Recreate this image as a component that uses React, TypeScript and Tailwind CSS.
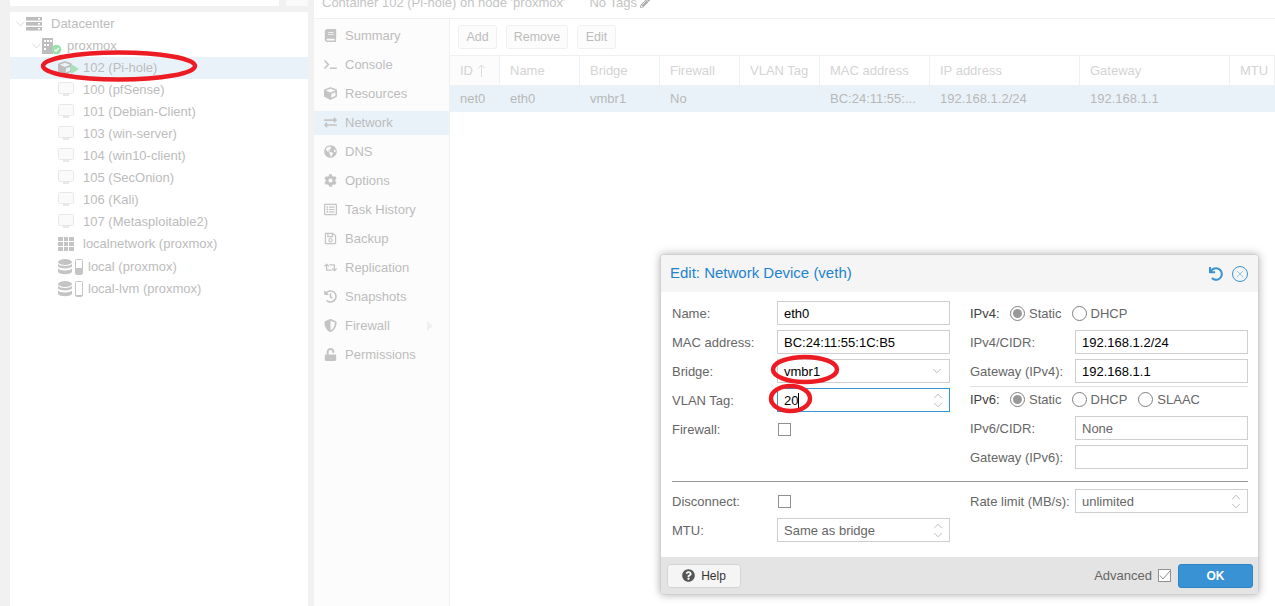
import type { ReactNode } from "react"
import {
  FaBook,
  FaCog,
  FaCube,
  FaExchangeAlt,
  FaGlobeAmericas,
  FaHistory,
  FaPencilAlt,
  FaQuestionCircle,
  FaRegListAlt,
  FaRegSave,
  FaRetweet,
  FaShieldAlt,
  FaTerminal,
  FaUndo,
  FaUnlock,
} from "react-icons/fa"
import { ChevronDown, ChevronUp, X } from "lucide-react"

const navItems = [
  { label: "Summary", icon: <FaBook /> },
  { label: "Console", icon: <FaTerminal /> },
  { label: "Resources", icon: <FaCube /> },
  { label: "Network", icon: <FaExchangeAlt />, active: true },
  { label: "DNS", icon: <FaGlobeAmericas /> },
  { label: "Options", icon: <FaCog /> },
  { label: "Task History", icon: <FaRegListAlt /> },
  { label: "Backup", icon: <FaRegSave /> },
  { label: "Replication", icon: <FaRetweet /> },
  { label: "Snapshots", icon: <FaHistory /> },
  { label: "Firewall", icon: <FaShieldAlt />, arrow: true },
  { label: "Permissions", icon: <FaUnlock /> },
]

const vms = [
  "100 (pfSense)",
  "101 (Debian-Client)",
  "103 (win-server)",
  "104 (win10-client)",
  "105 (SecOnion)",
  "106 (Kali)",
  "107 (Metasploitable2)",
]

const columns = [
  { label: "ID", width: "w-[50px]", value: "net0" },
  { label: "Name", width: "w-[80px]", value: "eth0" },
  { label: "Bridge", width: "w-[80px]", value: "vmbr1" },
  { label: "Firewall", width: "w-[80px]", value: "No" },
  { label: "VLAN Tag", width: "w-[80px]", value: "" },
  { label: "MAC address", width: "w-[110px]", value: "BC:24:11:55:..." },
  { label: "IP address", width: "w-[150px]", value: "192.168.1.2/24" },
  { label: "Gateway", width: "w-[150px]", value: "192.168.1.1" },
  { label: "MTU", width: "w-[45px]", value: "" },
]

function Caret() {
  return (
    <svg width="9" height="6" viewBox="0 0 9 6" className="shrink-0">
      <path d="M0.5 0.5 L4.5 5 L8.5 0.5" fill="none" stroke="#dcdcdc" strokeWidth="1" />
    </svg>
  )
}

function DesktopIcon() {
  return (
    <svg width="16" height="16" viewBox="0 0 16 16" className="shrink-0">
      <rect x="0.5" y="0.5" width="15" height="11" rx="1" fill="#fafafa" stroke="#e8e8e8" />
      <rect x="5" y="12" width="6" height="2" fill="#e8e8e8" />
    </svg>
  )
}

function StorageIcon({ fill }: { fill: number }) {
  return (
    <span className="flex shrink-0 items-center gap-[3px]">
      <svg width="14" height="16" viewBox="0 0 14 16">
        <ellipse cx="7" cy="3" rx="7" ry="3" fill="#c4c4c4" />
        <path d="M0 5 C2 7.5 12 7.5 14 5 V7.5 C12 10 2 10 0 7.5 Z" fill="#c4c4c4" />
        <path d="M0 9.5 C2 12 12 12 14 9.5 V13 C12 16 2 16 0 13 Z" fill="#c4c4c4" />
      </svg>
      <svg width="8" height="16" viewBox="0 0 8 16">
        <rect x="0.5" y="0.5" width="7" height="15" rx="1" fill="#fff" stroke="#c4c4c4" />
        <rect x="1" y={15 - fill} width="6" height={fill} fill="#c4c4c4" />
      </svg>
    </span>
  )
}

function TreeRow({
  indent,
  icon,
  label,
  active,
  caret,
}: {
  indent: string
  icon: ReactNode
  label: string
  active?: boolean
  caret?: boolean
}) {
  return (
    <div className={`flex h-[22px] items-center text-[13px] text-[#bcbcbc] ${indent} ${active ? "bg-[#eaf2f9]" : ""}`}>
      {caret && <span className="mr-[1px] flex"><Caret /></span>}
      {icon}
      <span className="ml-[9px] whitespace-nowrap">{label}</span>
    </div>
  )
}

function Tree() {
  return (
    <div className="flex h-full flex-col gap-[6px]">
      <div className="flex h-[6px] shrink-0 gap-[7px]">
        <div className="w-[269px] bg-white" />
        <div className="w-[22px] bg-[#fafafa]" />
      </div>
      <div className="flex-1 bg-white pt-[1px]">
        <TreeRow
          indent="pl-[6px]"
          caret
          label="Datacenter"
          icon={
            <svg width="16" height="14" viewBox="0 0 16 14" className="shrink-0">
              <rect width="16" height="3.6" fill="#bdbdbd" />
              <rect y="5" width="16" height="3.6" fill="#bdbdbd" />
              <rect y="10" width="16" height="3.6" fill="#bdbdbd" />
              <rect x="12" y="1" width="2" height="1.5" fill="#fff" />
              <rect x="12" y="6" width="2" height="1.5" fill="#fff" />
              <rect x="12" y="11" width="2" height="1.5" fill="#fff" />
            </svg>
          }
        />
        <TreeRow
          indent="pl-[22px]"
          caret
          label="proxmox"
          icon={
            <svg width="20" height="17" viewBox="0 0 20 17" className="-mr-[4px] shrink-0">
              <rect x="0" y="0" width="11" height="16" fill="#bdbdbd" />
              <rect x="2" y="2" width="2" height="2" fill="#fff" />
              <rect x="5" y="2" width="2" height="2" fill="#fff" />
              <rect x="8" y="2" width="2" height="2" fill="#fff" />
              <rect x="2" y="6" width="2" height="2" fill="#fff" />
              <rect x="5" y="6" width="2" height="2" fill="#fff" />
              <rect x="2" y="10" width="2" height="2" fill="#fff" />
              <circle cx="14.5" cy="11.5" r="4.8" fill="#9adfae" />
              <path d="M12.3 11.5 L14 13.2 L16.8 10" fill="none" stroke="#fff" strokeWidth="1.3" />
            </svg>
          }
        />
        <TreeRow
          indent="pl-[48px]"
          active
          label="102 (Pi-hole)"
          icon={
            <span className="relative flex w-[16px] shrink-0 items-center text-[14px] text-[#bdbdbd]">
              <FaCube />
              <svg width="8" height="10" viewBox="0 0 8 10" className="absolute left-[13px] top-[3px]">
                <path d="M0 0 L8 5 L0 10 Z" fill="#a5e3b5" />
              </svg>
            </span>
          }
        />
        {vms.map((vm) => (
          <TreeRow key={vm} indent="pl-[48px]" label={vm} icon={<DesktopIcon />} />
        ))}
        <TreeRow
          indent="pl-[48px]"
          label="localnetwork (proxmox)"
          icon={
            <span className="grid w-[16px] shrink-0 grid-cols-3 gap-[1px]">
              {Array.from({ length: 9 }).map((_, i) => (
                <span key={i} className="h-[4px] bg-[#c4c4c4]" />
              ))}
            </span>
          }
        />
        <div className="pt-[1px]">
          <div className="flex h-[22px] items-center pl-[48px] text-[13px] text-[#bcbcbc]">
            <StorageIcon fill={6} />
            <span className="ml-[5px] whitespace-nowrap">local (proxmox)</span>
          </div>
          <div className="flex h-[22px] items-center pl-[48px] text-[13px] text-[#bcbcbc]">
            <StorageIcon fill={1} />
            <span className="ml-[5px] whitespace-nowrap">local-lvm (proxmox)</span>
          </div>
        </div>
      </div>
    </div>
  )
}

function Nav() {
  return (
    <div className="flex w-[136px] shrink-0 flex-col border-r border-[#f0f0f0] bg-[#fcfcfc] pt-[2px]">
      {navItems.map((item) => (
        <div key={item.label} className="flex h-[29px] items-center">
          <div className={`flex h-[24px] w-full items-center pl-[9px] text-[13px] text-[#bcbcbc] ${item.active ? "bg-[#eaf2f9]" : ""}`}>
            <span className="flex w-[14px] justify-center text-[13px] text-[#c4c4c4]">{item.icon}</span>
            <span className="ml-[8px]">{item.label}</span>
            {item.arrow && (
              <svg width="6" height="10" viewBox="0 0 6 10" className="ml-auto mr-[16px]">
                <path d="M0 0 L6 5 L0 10 Z" fill="#f0f0f0" />
              </svg>
            )}
          </div>
        </div>
      ))}
    </div>
  )
}

function GhostButton({ width, children }: { width: string; children: ReactNode }) {
  return (
    <div className={`flex h-[24px] items-center justify-center rounded-[3px] border border-[#f0f0f0] bg-[#fcfcfc] text-[12.5px] text-[#bcbcbc] ${width}`}>
      {children}
    </div>
  )
}

function NetworkGrid() {
  return (
    <div className="flex min-w-0 flex-1 flex-col">
      <div className="flex h-[37px] shrink-0 items-center gap-[9px] border-b border-[#f0f0f0] pl-[8px]">
        <GhostButton width="w-[39px]">Add</GhostButton>
        <GhostButton width="w-[62px]">Remove</GhostButton>
        <GhostButton width="w-[39px]">Edit</GhostButton>
      </div>
      <div className="flex h-[30px] shrink-0 border-b border-[#f0f0f0]">
        {columns.map((col, i) => (
          <div
            key={col.label}
            className={`${col.width} flex shrink-0 items-center border-r border-[#f0f0f0] pl-[10px] text-[13px] text-[#d4d4d4] ${i === 0 ? "bg-[#fcfcfc]" : ""}`}
          >
            {col.label}
            {i === 0 && (
              <svg width="9" height="13" viewBox="0 0 9 13" className="ml-[4px]">
                <path d="M4.5 13 V1 M1 4.5 L4.5 1 L8 4.5" fill="none" stroke="#dcdcdc" />
              </svg>
            )}
          </div>
        ))}
      </div>
      <div className="flex h-[26px] shrink-0 bg-[#eaf2f9]">
        {columns.map((col) => (
          <div key={col.label} className={`${col.width} flex shrink-0 items-center pl-[10px] text-[13px] text-[#b8b8b8]`}>
            {col.value}
          </div>
        ))}
      </div>
    </div>
  )
}

function UpDown() {
  return (
    <span className="flex flex-col items-center text-[#8c8c8c]">
      <ChevronUp size={14} strokeWidth={1} className="-mb-[2px]" />
      <ChevronDown size={14} strokeWidth={1} className="-mt-[3px]" />
    </span>
  )
}

function Field({
  label,
  children,
  right,
  dark,
  focus,
}: {
  label: string
  children?: ReactNode
  right?: ReactNode
  dark?: boolean
  focus?: boolean
}) {
  return (
    <div className={`flex h-[24px] items-center justify-between border bg-white pl-[6px] pr-[4px] text-[13px] ${focus ? "border-[#3892d4]" : "border-[#cfcfcf]"} ${dark ? "text-black" : "text-[#666]"}`}>
      <span className="flex items-center pt-[1px]">
        {label}
        {children}
      </span>
      {right}
    </div>
  )
}

function FormRow({ label, width, dark, children }: { label: string; width: string; dark?: boolean; children: ReactNode }) {
  return (
    <div className="flex h-[24px] items-center">
      <span className={`${width} shrink-0 whitespace-nowrap pt-[1px] text-[13px] ${dark ? "text-[#404040]" : "text-[#666]"}`}>{label}</span>
      <div className="min-w-0 flex-1">{children}</div>
    </div>
  )
}

function Check({ checked }: { checked?: boolean }) {
  return (
    <span className="relative ml-[1px] block h-[13px] w-[13px] border border-[#909090] bg-white">
      {checked && (
        <svg width="13" height="12" viewBox="0 0 13 12" className="absolute -left-[1px] -top-[1px]">
          <path d="M2 6.5 L5 10 L12 2" fill="none" stroke="#909090" strokeWidth="1" />
        </svg>
      )}
    </span>
  )
}

function Radio({ label, checked }: { label: string; checked?: boolean }) {
  return (
    <span className="flex items-center gap-[4px] text-[13px] text-[#666]">
      <span className="flex h-[15px] w-[15px] items-center justify-center rounded-full border border-[#808080]">
        {checked && <span className="h-[9px] w-[9px] rounded-full bg-[#999]" />}
      </span>
      <span className="pt-[1px]">{label}</span>
    </span>
  )
}

function EditDialog() {
  return (
    <div className="absolute left-[660px] top-[254px] flex h-[341px] w-[599px] flex-col overflow-hidden rounded-[4px] border border-[#d0d0d0] bg-white shadow-[0_0_8px_rgba(0,0,0,0.3)]">
      <div className="flex h-[37px] shrink-0 items-center justify-between bg-[#f5f5f5] pl-[9px] pr-[10px]">
        <span className="text-[15px] text-[#1e83cf]">Edit: Network Device (veth)</span>
        <span className="flex items-center gap-[9px]">
          <FaUndo className="text-[14px] text-[#3892d4]" />
          <span className="flex h-[16px] w-[16px] items-center justify-center rounded-full border border-[#3892d4] text-[#3892d4]">
            <X size={12} strokeWidth={1} />
          </span>
        </span>
      </div>
      <div className="flex flex-1 flex-col pl-[11px] pr-[10px] pt-[9px]">
        <div className="flex gap-[20px]">
          <div className="flex w-[278px] shrink-0 flex-col gap-[5px]">
            <FormRow label="Name:" width="w-[105px]"><Field label="eth0" dark /></FormRow>
            <FormRow label="MAC address:" width="w-[105px]"><Field label="BC:24:11:55:1C:B5" dark /></FormRow>
            <FormRow label="Bridge:" width="w-[105px]">
              <Field label="vmbr1" dark right={<ChevronDown size={14} strokeWidth={1} className="mr-[1px] text-[#8c8c8c]" />} />
            </FormRow>
            <FormRow label="VLAN Tag:" width="w-[105px]">
              <Field label="20" dark focus right={<UpDown />}>
                <span className="h-[15px] w-[1px] bg-black" />
              </Field>
            </FormRow>
            <FormRow label="Firewall:" width="w-[105px]"><Check /></FormRow>
          </div>
          <div className="flex min-w-0 flex-1 flex-col">
            <FormRow label="IPv4:" width="w-[40px]" dark>
              <span className="flex gap-[10px]">
                <Radio label="Static" checked />
                <Radio label="DHCP" />
              </span>
            </FormRow>
            <div className="mt-[5px] flex flex-col gap-[5px]">
              <FormRow label="IPv4/CIDR:" width="w-[105px]"><Field label="192.168.1.2/24" dark /></FormRow>
              <FormRow label="Gateway (IPv4):" width="w-[105px]"><Field label="192.168.1.1" dark /></FormRow>
            </div>
            <div className="mt-[3px] border-t border-[#e0e0e0]">
              <FormRow label="IPv6:" width="w-[40px]" dark>
                <span className="flex gap-[10px]">
                  <Radio label="Static" checked />
                  <Radio label="DHCP" />
                  <span className="ml-[1px]"><Radio label="SLAAC" /></span>
                </span>
              </FormRow>
            </div>
            <div className="mt-[5px] flex flex-col gap-[5px]">
              <FormRow label="IPv6/CIDR:" width="w-[105px]"><Field label="None" /></FormRow>
              <FormRow label="Gateway (IPv6):" width="w-[105px]"><Field label="" /></FormRow>
            </div>
          </div>
        </div>
        <div className="mt-[12px] border-t border-[#999]" />
        <div className="mt-[7px] flex gap-[20px]">
          <div className="flex w-[278px] shrink-0 flex-col gap-[5px]">
            <FormRow label="Disconnect:" width="w-[105px]"><Check /></FormRow>
            <FormRow label="MTU:" width="w-[105px]"><Field label="Same as bridge" right={<UpDown />} /></FormRow>
          </div>
          <div className="min-w-0 flex-1">
            <FormRow label="Rate limit (MB/s):" width="w-[105px]"><Field label="unlimited" right={<UpDown />} /></FormRow>
          </div>
        </div>
      </div>
      <div className="flex h-[37px] shrink-0 items-center justify-between bg-[#e4e4e4] pl-[6px] pr-[5px]">
        <div className="flex h-[24px] w-[74px] items-center justify-center gap-[6px] rounded-[3px] border border-[#d4d4d4] bg-[#f5f5f5] text-[12px] text-[#333]">
          <FaQuestionCircle className="text-[13px] text-[#555]" />
          Help
        </div>
        <div className="flex items-center gap-[5px]">
          <span className="text-[13px] text-[#666]">Advanced</span>
          <Check checked />
          <div className="ml-[2px] flex h-[24px] w-[75px] items-center justify-center rounded-[3px] border border-[#2f84c4] bg-[#3892d4] text-[12px] font-bold text-white">
            OK
          </div>
        </div>
      </div>
    </div>
  )
}

function RedMarks() {
  return (
    <svg width="1275" height="606" viewBox="0 0 1275 606" className="pointer-events-none absolute inset-0">
      <g fill="none" stroke="#ed1c24" strokeWidth="4.5">
        <ellipse cx="119" cy="66" rx="76" ry="13.5" />
        <ellipse cx="805" cy="369.5" rx="32" ry="12.5" />
        <ellipse cx="790.5" cy="398.5" rx="19.5" ry="12.5" />
      </g>
    </svg>
  )
}

export default function App() {
  return (
    <div className="relative flex h-[606px] w-[1275px] gap-[6px] overflow-hidden bg-[#f1f1f1] pl-[10px] font-['Liberation_Sans',Arial,sans-serif]">
      <div className="w-[298px] shrink-0">
        <Tree />
      </div>
      <div className="flex min-w-0 flex-1 flex-col bg-white">
        <div className="flex h-[19px] shrink-0 items-end gap-[24px] overflow-hidden border-b border-[#f0f0f0] pb-[8px] pl-[8px] text-[13px] leading-[15px] text-[#c4c4c4]">
          <span className="whitespace-nowrap">Container 102 (Pi-hole) on node 'proxmox'</span>
          <span className="flex items-center gap-[3px] whitespace-nowrap">
            No Tags
            <FaPencilAlt className="text-[10px] text-[#a8a8a8]" />
          </span>
        </div>
        <div className="flex min-h-0 flex-1">
          <Nav />
          <NetworkGrid />
        </div>
      </div>
      <EditDialog />
      <RedMarks />
    </div>
  )
}
